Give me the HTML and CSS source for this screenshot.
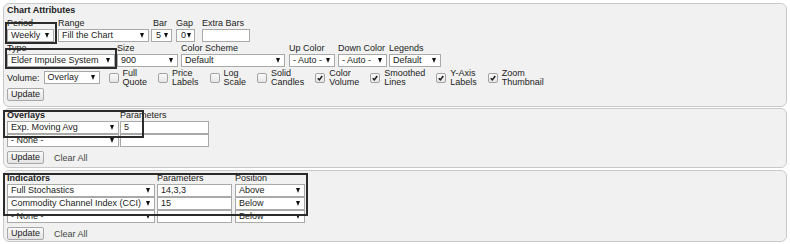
FILE: index.html
```html
<!DOCTYPE html>
<html lang="en">
<head>
    <meta charset="UTF-8">
    <title>Chart Settings</title>
    <link rel="stylesheet" href="styles.css">
</head>
<body>
    <form class="panel panel--attrs">
        <div class="panel__title">Chart Attributes</div>
        <div class="grid grid--row1">
            <span class="lbl">Period</span>
            <span class="lbl">Range</span>
            <span class="lbl lbl--in">Bar</span>
            <span class="lbl">Gap</span>
            <span class="lbl">Extra Bars</span>
            <span class="sel w-47">Weekly</span>
            <span class="sel w-91">Fill the Chart</span>
            <span class="sel sel--tiny w-21">5</span>
            <span class="sel sel--tiny w-19">0</span>
            <span class="inp w-48"></span>
        </div>
        <div class="grid grid--row2">
            <span class="lbl">Type</span>
            <span class="lbl">Size</span>
            <span class="lbl">Color Scheme</span>
            <span class="lbl">Up Color</span>
            <span class="lbl">Down Color</span>
            <span class="lbl">Legends</span>
            <span class="sel w-108">Elder Impulse System</span>
            <span class="sel w-61">900</span>
            <span class="sel w-104">Default</span>
            <span class="sel w-46">- Auto -</span>
            <span class="sel w-49">- Auto -</span>
            <span class="sel w-52">Default</span>
        </div>
        <div class="opts">
            <span class="opts__label">Volume:</span>
            <span class="sel w-56">Overlay</span>
            <span class="chk"><span class="chk__box"></span><span class="chk__text">Full<br>Quote</span></span>
            <span class="chk"><span class="chk__box"></span><span class="chk__text">Price<br>Labels</span></span>
            <span class="chk"><span class="chk__box"></span><span class="chk__text">Log<br>Scale</span></span>
            <span class="chk"><span class="chk__box"></span><span class="chk__text">Solid<br>Candles</span></span>
            <span class="chk"><span class="chk__box chk__box--on"><svg viewBox="0 0 10 10"><path d="M2.2 5.2 L4.2 7.4 L7.8 2.6"/></svg></span><span class="chk__text">Color<br>Volume</span></span>
            <span class="chk"><span class="chk__box chk__box--on"><svg viewBox="0 0 10 10"><path d="M2.2 5.2 L4.2 7.4 L7.8 2.6"/></svg></span><span class="chk__text">Smoothed<br>Lines</span></span>
            <span class="chk"><span class="chk__box chk__box--on"><svg viewBox="0 0 10 10"><path d="M2.2 5.2 L4.2 7.4 L7.8 2.6"/></svg></span><span class="chk__text">Y-Axis<br>Labels</span></span>
            <span class="chk"><span class="chk__box chk__box--on"><svg viewBox="0 0 10 10"><path d="M2.2 5.2 L4.2 7.4 L7.8 2.6"/></svg></span><span class="chk__text">Zoom<br>Thumbnail</span></span>
        </div>
        <div class="actions">
            <span class="btn">Update</span>
        </div>
        <div class="mark mark--period"></div>
        <div class="mark mark--type"></div>
    </form>

    <form class="panel panel--overlays">
        <div class="grid grid--overlays">
            <span class="lbl lbl--title">Overlays</span>
            <span class="lbl">Parameters</span>
            <span class="sel w-112">Exp. Moving Avg</span>
            <span class="inp w-89">5</span>
            <span class="sel w-112">- None -</span>
            <span class="inp w-89"></span>
        </div>
        <div class="actions actions--gap">
            <span class="btn">Update</span>
            <span class="link">Clear All</span>
        </div>
        <div class="mark mark--overlays"></div>
    </form>

    <form class="panel panel--indicators">
        <div class="grid grid--indicators">
            <span class="lbl lbl--title">Indicators</span>
            <span class="lbl">Parameters</span>
            <span class="lbl">Position</span>
            <span class="sel w-148">Full Stochastics</span>
            <span class="inp w-75">14,3,3</span>
            <span class="sel w-70">Above</span>
            <span class="sel w-148">Commodity Channel Index (CCI)</span>
            <span class="inp w-75">15</span>
            <span class="sel w-70">Below</span>
            <span class="sel w-148">- None -</span>
            <span class="inp w-75"></span>
            <span class="sel w-70">Below</span>
        </div>
        <div class="actions actions--gap">
            <span class="btn">Update</span>
            <span class="link">Clear All</span>
        </div>
        <div class="mark mark--indicators"></div>
    </form>
</body>
</html>
```

FILE: styles.css
```css
*{
    box-sizing: border-box;
}
body{
    margin: 3px;
    background: #fff;
    color: #222;
    font-family: "Liberation Sans", Arial, sans-serif;
    font-size: 9px;
}
.panel{
    position: relative;
    display: block;
    background: #f1f1f1;
    border: 1px solid #c9c9c9;
    border-radius: 6px;
    padding: 0 3px 5px;
}
.panel--overlays{
    margin-top: 1px;
    padding-bottom: 3px;
}
.panel--indicators{
    margin-top: 2px;
    padding-bottom: 1px;
}
.panel__title{
    font-weight: bold;
    line-height: 13px;
}
.grid{
    display: grid;
    align-items: end;
}
.grid--row1{
    grid-template-columns: 51px 93px 25px 26px 48px;
    grid-template-rows: 12px 13px;
}
.grid--row2{
    grid-template-columns: 110px 64px 108px 49px 51px 53px;
    grid-template-rows: 12px 13px;
}
.grid--overlays{
    grid-template-columns: 113px 89px;
    grid-template-rows: 12px 13px 13px;
}
.grid--indicators{
    grid-template-columns: 150px 78px 71px;
    grid-template-rows: 13px 13px 13px 13px;
}
.lbl{
    line-height: 12px;
    white-space: nowrap;
}
.lbl--in{
    padding-left: 2px;
}
.lbl--title{
    font-weight: bold;
}
.sel,
.inp{
    position: relative;
    display: block;
    height: 13px;
    line-height: 11px;
    background: #fff;
    border: 1px solid #a9a9a9;
    padding: 0 3px;
    white-space: nowrap;
    overflow: hidden;
}
.sel{
    padding-right: 12px;
}
.sel::after{
    content: "";
    position: absolute;
    right: 4px;
    top: 3px;
    border-left: 2.5px solid transparent;
    border-right: 2.5px solid transparent;
    border-top: 5px solid #111;
}
.sel--tiny{
    padding: 0 0 0 4px;
}
.sel--tiny::after{
    right: 3px;
}
.w-19{ width: 19px; }
.w-21{ width: 21px; }
.w-46{ width: 46px; }
.w-47{ width: 47px; }
.w-48{ width: 48px; }
.w-49{ width: 49px; }
.w-52{ width: 52px; }
.w-56{ width: 56px; }
.w-61{ width: 61px; }
.w-70{ width: 70px; }
.w-75{ width: 75px; }
.w-89{ width: 89px; }
.w-91{ width: 91px; }
.w-104{ width: 104px; }
.w-108{ width: 108px; }
.w-112{ width: 112px; }
.w-148{ width: 148px; }

.opts{
    display: flex;
    align-items: center;
    height: 19px;
    margin-top: 1px;
}
.opts__label{
    margin-right: 4px;
}
.opts .sel{
    margin-right: 9px;
}
.chk{
    display: flex;
    align-items: center;
    margin-right: 11px;
}
.chk__box{
    width: 10px;
    height: 10px;
    margin-right: 4px;
    border: 1px solid #a2a2a2;
    border-radius: 2px;
    background: linear-gradient(#fafafa, #e6e6e6);
}
.chk__box svg{
    display: block;
    width: 8px;
    height: 8px;
}
.chk__box svg path{
    fill: none;
    stroke: #1d1d1d;
    stroke-width: 1.9;
}
.chk__text{
    line-height: 9px;
}
.actions{
    display: flex;
    align-items: center;
    margin-top: 1px;
}
.actions--gap{
    margin-top: 4px;
}
.btn{
    height: 13px;
    line-height: 11px;
    padding: 0 3px;
    border: 1px solid #a8a8a8;
    border-radius: 2px;
    background: linear-gradient(#fbfbfb, #e3e3e3);
}
.link{
    margin-left: 10px;
    color: #444;
}
.mark{
    position: absolute;
    border: 2px solid #2b2b2b;
}
.mark--period{
    left: 1px;
    top: 18px;
    width: 52px;
    height: 22px;
}
.mark--type{
    left: 1px;
    top: 44px;
    width: 112px;
    height: 21px;
}
.mark--overlays{
    left: -1px;
    top: 1px;
    width: 141px;
    height: 28px;
}
.mark--indicators{
    left: -1px;
    top: 2px;
    width: 305px;
    height: 43px;
}
```
